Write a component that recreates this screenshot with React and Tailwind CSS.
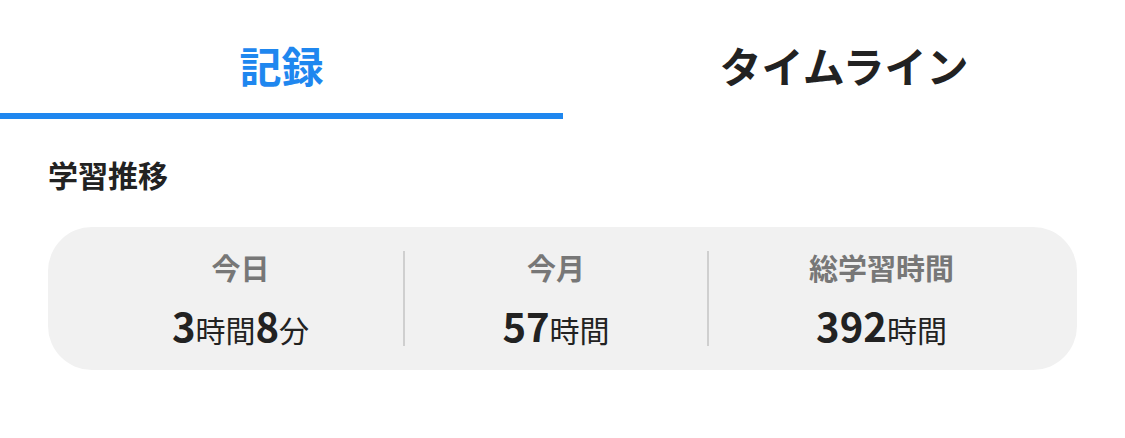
import React from "react";

const font = { fontFamily: '"Noto Sans CJK JP", "Noto Sans", sans-serif' };

function Stat({ label, children, className }) {
  return (
    <div className={"flex flex-col items-center " + className}>
      <div className="text-[29px] leading-[40px] font-bold text-[#777777]">{label}</div>
      <div className="mt-[16px] flex items-baseline text-[#222222] leading-[44px]">{children}</div>
    </div>
  );
}

const Num = ({ children }) => <span className="text-[40px] font-bold">{children}</span>;
const Unit = ({ children }) => <span className="text-[30px] font-normal">{children}</span>;

export default function App() {
  return (
    <div className="w-[1125px] h-[438px] bg-white" style={font}>
      <div className="flex h-[119px]">
        <div className="w-[563px] flex items-center justify-center border-b-[6px] border-[#1f87ef]">
          <span className="text-[42px] font-bold text-[#1f87ef] mt-[16px]">記録</span>
        </div>
        <div className="flex-1 flex items-center justify-center">
          <span className="text-[42px] font-bold text-[#222222] mt-[10px]">タイムライン</span>
        </div>
      </div>
      <div className="px-[48px] pt-[38px]">
        <div className="text-[30px] font-bold text-[#222222] leading-[34px]">学習推移</div>
        <div className="mt-[36px] h-[143px] rounded-[44px] bg-[#f1f1f1] flex items-center pl-[30px] pr-[23px]">
          <Stat label="今日" className="w-[325px]">
            <Num>3</Num><Unit>時間</Unit><Num>8</Num><Unit>分</Unit>
          </Stat>
          <div className="w-[2px] h-[95px] bg-[#cfcfcf]" />
          <Stat label="今月" className="w-[302px]">
            <Num>57</Num><Unit>時間</Unit>
          </Stat>
          <div className="w-[2px] h-[95px] bg-[#cfcfcf]" />
          <Stat label="総学習時間" className="flex-1">
            <Num>392</Num><Unit>時間</Unit>
          </Stat>
        </div>
      </div>
    </div>
  );
}
